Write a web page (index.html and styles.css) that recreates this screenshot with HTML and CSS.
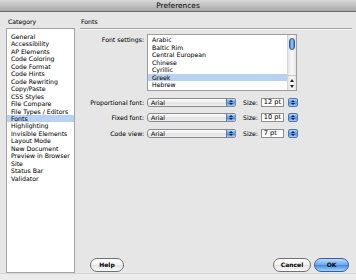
FILE: index.html
```html
<!DOCTYPE html>
<html lang="en">
<head>
    <meta charset="UTF-8">
    <title>Preferences</title>
    <link rel="stylesheet" href="styles.css">
</head>
<body>

    <div class="titlebar">Preferences</div>

    <div class="content">

        <div class="category">
            <div class="head">Category</div>
            <ul class="catlist">
                <li>General</li>
                <li>Accessibility</li>
                <li>AP Elements</li>
                <li>Code Coloring</li>
                <li>Code Format</li>
                <li>Code Hints</li>
                <li>Code Rewriting</li>
                <li>Copy/Paste</li>
                <li>CSS Styles</li>
                <li>File Compare</li>
                <li>File Types / Editors</li>
                <li class="sel">Fonts</li>
                <li>Highlighting</li>
                <li>Invisible Elements</li>
                <li>Layout Mode</li>
                <li>New Document</li>
                <li>Preview in Browser</li>
                <li>Site</li>
                <li>Status Bar</li>
                <li>Validator</li>
            </ul>
        </div>

        <div class="panel">
            <div class="head">Fonts</div>
            <div class="rule"></div>

            <div class="settings">
                <div class="label top">Font settings:</div>
                <div class="fontlist">
                    <ul class="encodings">
                        <li>Arabic</li>
                        <li>Baltic Rim</li>
                        <li>Central European</li>
                        <li>Chinese</li>
                        <li>Cyrillic</li>
                        <li class="sel">Greek</li>
                        <li>Hebrew</li>
                    </ul>
                    <div class="scrollbar">
                        <div class="thumb"></div>
                        <div class="arrows">
                            <span class="up"></span>
                            <span class="down"></span>
                        </div>
                    </div>
                </div>

                <div class="label">Proportional font:</div>
                <div class="field">
                    <div class="select"><span>Arial</span><div class="caret"><i class="up"></i><i class="down"></i></div></div>
                    <span class="size">Size:</span>
                    <div class="input">12 pt</div>
                    <div class="stepper"><i class="up"></i><i class="down"></i></div>
                </div>

                <div class="label">Fixed font:</div>
                <div class="field">
                    <div class="select"><span>Arial</span><div class="caret"><i class="up"></i><i class="down"></i></div></div>
                    <span class="size">Size:</span>
                    <div class="input">10 pt</div>
                    <div class="stepper"><i class="up"></i><i class="down"></i></div>
                </div>

                <div class="label">Code view:</div>
                <div class="field">
                    <div class="select"><span>Arial</span><div class="caret"><i class="up"></i><i class="down"></i></div></div>
                    <span class="size">Size:</span>
                    <div class="input">7 pt</div>
                    <div class="stepper"><i class="up"></i><i class="down"></i></div>
                </div>
            </div>

            <div class="buttons">
                <div class="btn help">Help</div>
                <div class="btn cancel">Cancel</div>
                <div class="btn ok">OK</div>
            </div>
        </div>

    </div>

    <div class="bottom"></div>

</body>
</html>
```

FILE: styles.css
```css
*
{
    box-sizing: border-box;
}

body
{
    margin: 0;
    width: 356px;
    height: 280px;
    overflow: hidden;
    background: #e6e6e6;
    font-family: "DejaVu Sans", sans-serif;
    font-size: 6.2px;
    color: #111;
    text-shadow: 0 0 0.2px rgba(0, 0, 0, 0.25);
}

ul
{
    list-style: none;
    margin: 0;
    padding: 0;
}

.titlebar
{
    height: 12px;
    background: linear-gradient(#d8d8d8, #a8a8a8);
    border-bottom: 1px solid #6c6c6c;
    text-align: center;
    font-size: 7.4px;
    line-height: 11px;
    color: #1b1b1b;
}

.content
{
    display: flex;
    height: 261px;
}

.bottom
{
    height: 7px;
    border-top: 1px solid #d6d6d6;
    background: #ececec;
}

.head
{
    height: 16px;
    padding: 6px 0 0 2px;
    line-height: 8px;
}

/* left column */

.category
{
    width: 80px;
    padding-left: 6px;
    display: flex;
    flex-direction: column;
}

.catlist
{
    flex: 1;
    width: 69px;
    background: #fff;
    border: 1px solid #a4a4a4;
    padding-top: 4px;
}

.catlist li
{
    line-height: 7.45px;
    padding-left: 4px;
    white-space: nowrap;
}

.sel
{
    background: #b8d2f2;
}

/* right column */

.panel
{
    flex: 1;
    display: flex;
    flex-direction: column;
    padding-right: 4px;
}

.panel .head
{
    padding-left: 1px;
}

.rule
{
    border-top: 1px solid #a9a9a9;
    border-bottom: 1px solid #f4f4f4;
}

.settings
{
    display: grid;
    grid-template-columns: 64px auto;
    column-gap: 3px;
    row-gap: 6.5px;
    margin-top: 4px;
}

.label
{
    text-align: right;
    line-height: 9px;
    white-space: nowrap;
}

.label.top
{
    padding-top: 2px;
    line-height: 7.5px;
}

.fontlist
{
    display: flex;
    width: 150px;
    height: 57px;
    background: #fff;
    border: 1px solid #9c9c9c;
}

.encodings
{
    flex: 1;
    padding-top: 1px;
}

.encodings li
{
    line-height: 7.5px;
    padding-left: 4px;
}

.scrollbar
{
    width: 9px;
    display: flex;
    flex-direction: column;
    align-items: center;
    border-left: 1px solid #d4d4d4;
    background: linear-gradient(90deg, #e4e4e4, #fafafa 50%, #e4e4e4);
}

.thumb
{
    width: 6px;
    height: 12px;
    margin-top: 3px;
    border-radius: 3px;
    border: 1px solid #2f5d9c;
    background: linear-gradient(90deg, #3b78cf, #a5cdf7 50%, #3b78cf);
}

.arrows
{
    margin-top: auto;
    width: 100%;
    display: flex;
    flex-direction: column;
    align-items: center;
    gap: 3px;
    padding: 3px 0 2px;
    border-top: 1px solid #c8c8c8;
}

.arrows span, .caret i, .stepper i
{
    display: block;
    width: 0;
    height: 0;
    border-left: 2px solid transparent;
    border-right: 2px solid transparent;
}

.arrows .up
{
    border-bottom: 3px solid #222;
}

.arrows .down
{
    border-top: 3px solid #222;
}

.field
{
    display: flex;
    align-items: center;
    height: 9px;
}

.select
{
    display: flex;
    align-items: center;
    width: 89px;
    height: 9px;
    border: 1px solid #8a8a8a;
    border-radius: 3px 2px 2px 3px;
    background: linear-gradient(#ffffff, #eaeaea 50%, #dcdcdc 51%, #f2f2f2);
    overflow: hidden;
}

.select span
{
    flex: 1;
    padding-left: 3px;
    line-height: 7px;
}

.caret, .stepper
{
    display: flex;
    flex-direction: column;
    align-items: center;
    justify-content: center;
    gap: 1px;
    background: linear-gradient(#b6d7fa, #5b9ce6 50%, #3f86df 51%, #a6d0fb);
}

.caret
{
    width: 9px;
    height: 100%;
    border-left: 1px solid #5a7fae;
}

.caret .up, .stepper .up
{
    border-bottom: 2px solid #10233f;
}

.caret .down, .stepper .down
{
    border-top: 2px solid #10233f;
}

.size
{
    margin-left: 7px;
}

.input
{
    margin-left: 3px;
    width: 23px;
    height: 9px;
    padding-left: 2px;
    line-height: 7px;
    background: #fff;
    border: 1px solid #8e8e8e;
    font-size: 6.6px;
}

.stepper
{
    margin-left: 4px;
    width: 10px;
    height: 9px;
    border: 1px solid #4f76a8;
    border-radius: 2px;
}

.buttons
{
    margin-top: auto;
    margin-bottom: 1px;
    display: flex;
    gap: 3px;
}

.btn
{
    height: 14px;
    border-radius: 7px;
    border: 1px solid #6f6f6f;
    background: linear-gradient(#ffffff, #f0f0f0 50%, #e2e2e2 51%, #fafafa);
    text-align: center;
    line-height: 12px;
    font-weight: bold;
    font-size: 6px;
}

.help
{
    width: 34px;
    margin-left: 10px;
    margin-right: auto;
}

.cancel
{
    width: 38px;
}

.ok
{
    width: 35px;
    margin-right: 3px;
    border-color: #3b5f95;
    background: linear-gradient(#b9dbfb, #6aa8ec 50%, #3f88e2 51%, #a7d3fd);
}
```
